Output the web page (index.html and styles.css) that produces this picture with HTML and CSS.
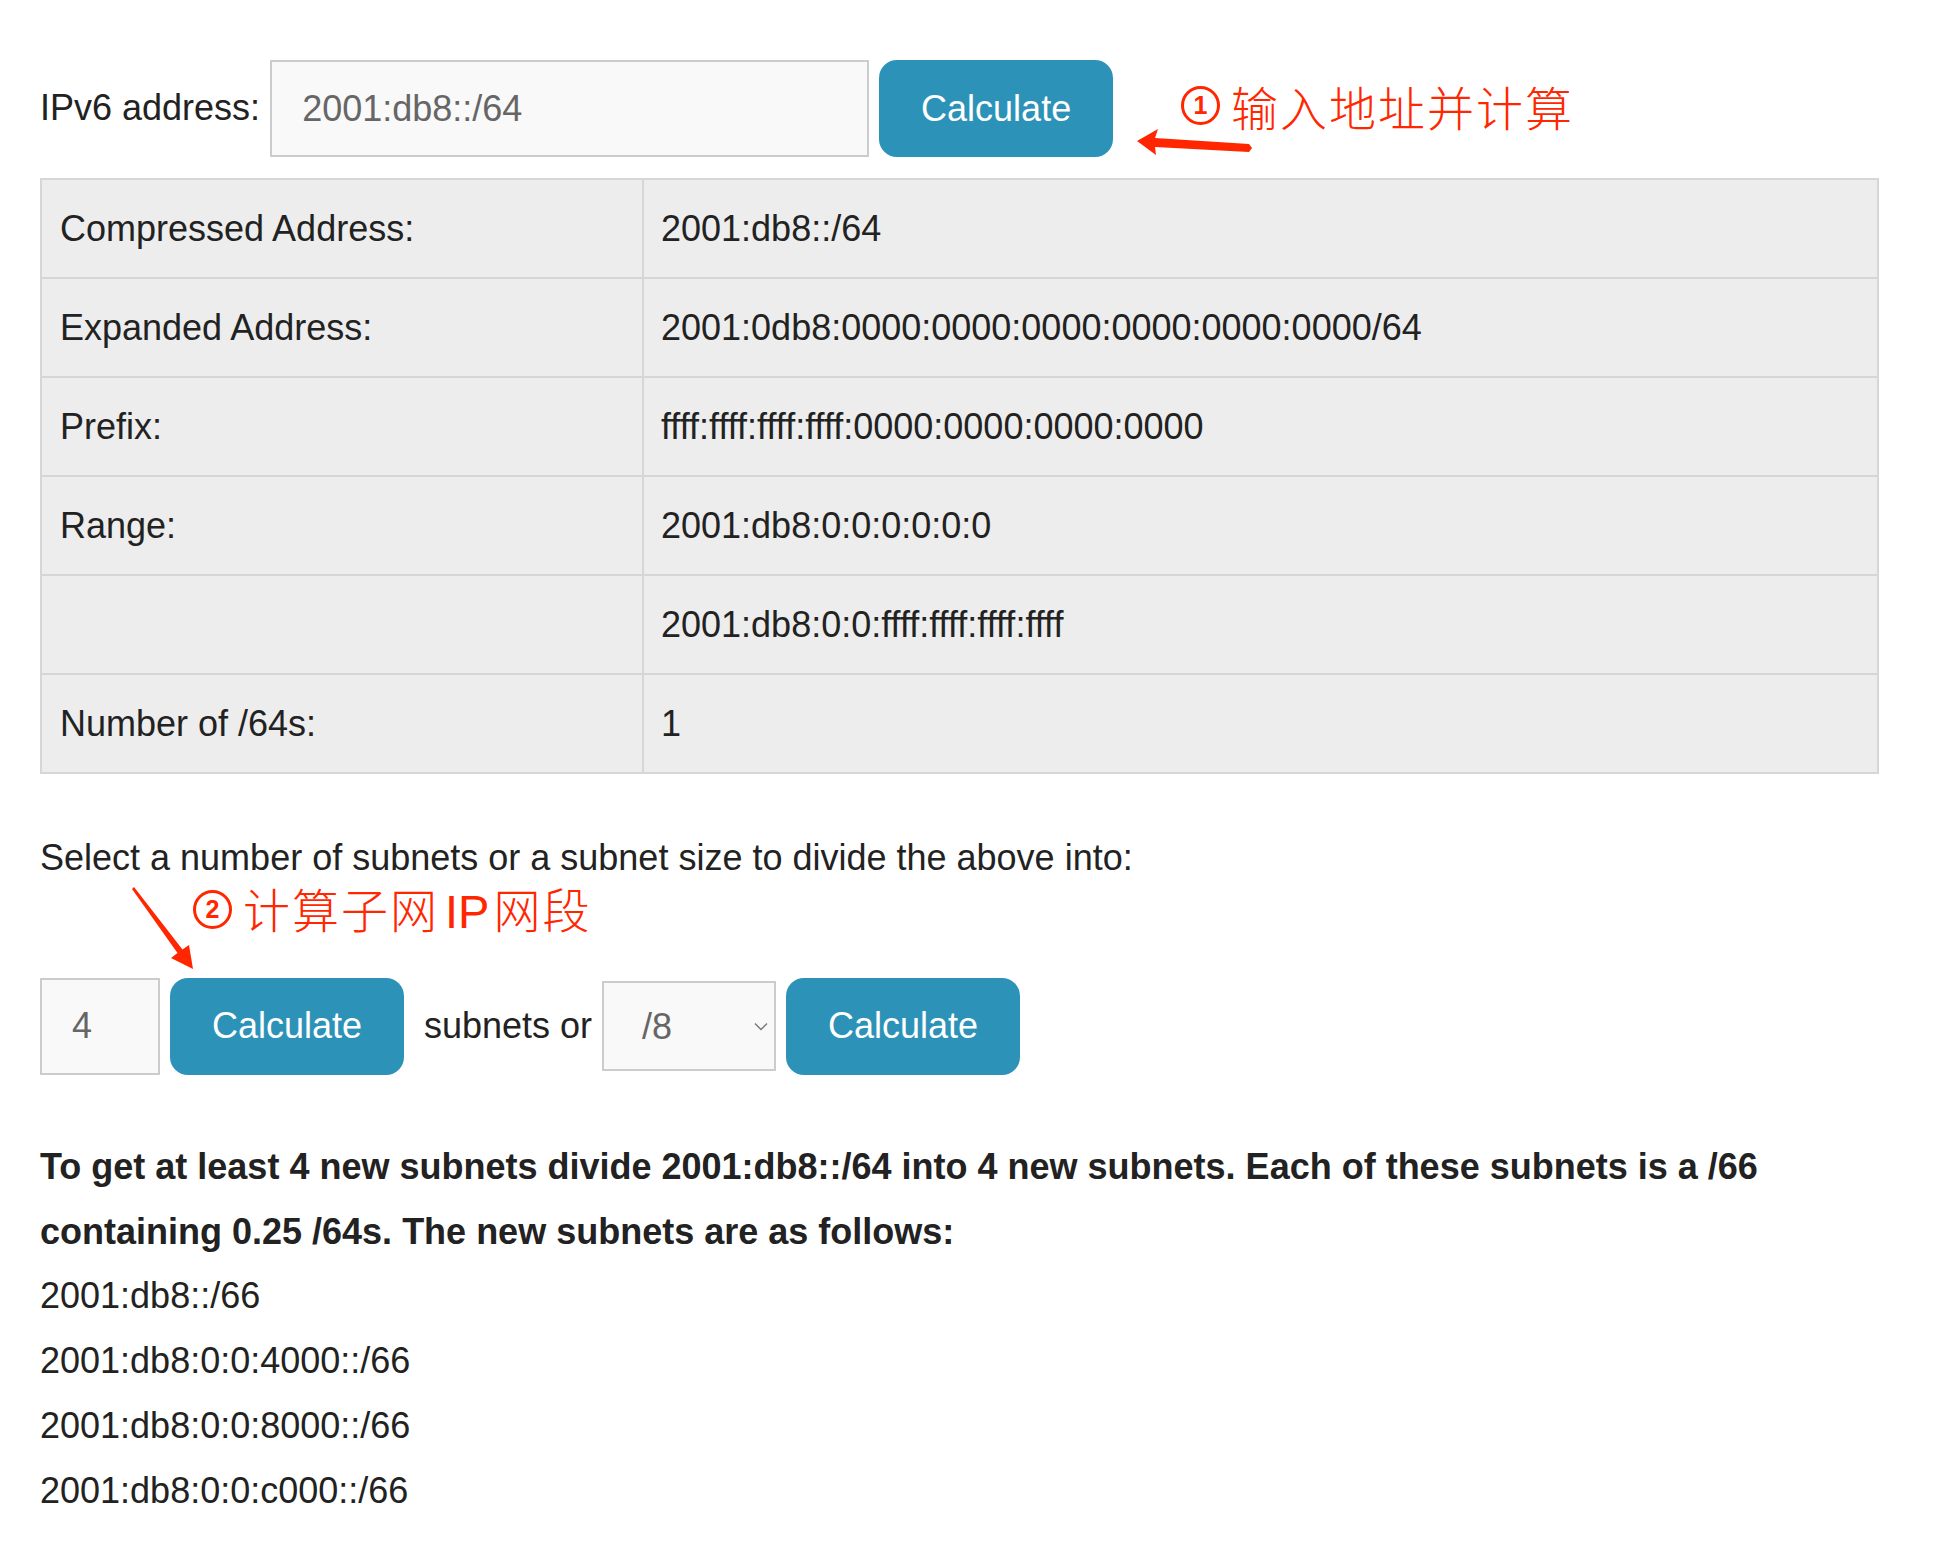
FILE: index.html
```html
<!DOCTYPE html>
<html>
<head>
    <title>IPv6 Subnet Calculator</title>
    <link rel="stylesheet" href="styles.css">
</head>
<body>
    <div class="page">
        <div class="form-row">
            <label for="ipv6Input" class="field-label">IPv6 address:</label>
            <input id="ipv6Input" class="text-input address-input" type="text" value="2001:db8::/64">
            <button class="calc-button">Calculate</button>
        </div>

        <table class="result-table">
            <tr>
                <td class="key">Compressed Address:</td>
                <td>2001:db8::/64</td>
            </tr>
            <tr>
                <td class="key">Expanded Address:</td>
                <td>2001:0db8:0000:0000:0000:0000:0000:0000/64</td>
            </tr>
            <tr>
                <td class="key">Prefix:</td>
                <td>ffff:ffff:ffff:ffff:0000:0000:0000:0000</td>
            </tr>
            <tr>
                <td class="key">Range:</td>
                <td>2001:db8:0:0:0:0:0:0</td>
            </tr>
            <tr>
                <td class="key"></td>
                <td>2001:db8:0:0:ffff:ffff:ffff:ffff</td>
            </tr>
            <tr>
                <td class="key">Number of /64s:</td>
                <td>1</td>
            </tr>
        </table>

        <p class="hint">Select a number of subnets or a subnet size to divide the above into:</p>

        <div class="form-row subnet-row">
            <input id="countInput" class="text-input count-input" type="text" value="4">
            <button class="calc-button">Calculate</button>
            <span class="or-label">subnets or</span>
            <div class="select-wrap">
                <select id="sizeSelect" class="size-select">
                    <option>/8</option>
                </select>
                <svg class="chevron" width="14" height="9" viewBox="0 0 14 9">
                    <path d="M1 1.5 L7 7.5 L13 1.5" fill="none" stroke="#777" stroke-width="1.4"/>
                </svg>
            </div>
            <button class="calc-button">Calculate</button>
        </div>

        <p class="summary">To get at least 4 new subnets divide 2001:db8::/64 into 4 new subnets. Each of these subnets is a /66 containing 0.25 /64s. The new subnets are as follows:</p>
        <ul class="subnet-list">
            <li>2001:db8::/66</li>
            <li>2001:db8:0:0:4000::/66</li>
            <li>2001:db8:0:0:8000::/66</li>
            <li>2001:db8:0:0:c000::/66</li>
        </ul>

        <!-- annotations drawn over the page -->
        <div class="note note-one">
            <span class="note-num">1</span>
            <span class="note-text">输入地址并计算</span>
        </div>
        <div class="note note-two">
            <span class="note-num">2</span>
            <span class="note-text">计算子网<span class="note-latin">IP</span>网段</span>
        </div>
        <svg class="arrows" width="1954" height="1568" viewBox="0 0 1954 1568">
            <polygon fill="#ff2600" points="1137,141 1158,129 1155,138 1249,144 1252,148 1249,152 1155,147 1156,155"/>
            <polygon fill="#ff2600" points="193,969 171,958 177.5,953 132,889 134,887 182.5,949.5 189,945"/>
        </svg>
    </div>
</body>
</html>
```

FILE: styles.css
```css
body {
    margin: 0;
    background-color: #fff;
    font-family: "Liberation Sans", Arial, sans-serif;
    font-size: 36px;
    line-height: 1.8;
    color: #222;
}

.page {
    position: relative;
    width: 1839px;
    padding: 60px 0 60px 40px;
}

.form-row {
    display: flex;
    align-items: center;
    gap: 10px;
    height: 97px;
}

.field-label {
    white-space: nowrap;
}

.text-input {
    box-sizing: border-box;
    height: 97px;
    border: 2px solid #ccc;
    background-color: #f9f9f9;
    color: #666;
    font-family: inherit;
    font-size: 36px;
    outline: none;
}

.address-input {
    width: 599px;
    padding: 0 30px;
}

.count-input {
    width: 120px;
    padding: 0 30px;
}

.calc-button {
    box-sizing: border-box;
    width: 234px;
    height: 97px;
    border: none;
    border-radius: 18px;
    background-color: #2d92b8;
    color: #fff;
    font-family: inherit;
    font-size: 36px;
    cursor: pointer;
    padding: 0;
}

.result-table {
    width: 1839px;
    margin-top: 21px;
    border-collapse: collapse;
    background-color: #ededed;
    border: 2px solid #d6d6d6;
}

.result-table td {
    height: 97px;
    padding: 0 16px 0 17px;
    border: 2px solid #d6d6d6;
    vertical-align: middle;
    line-height: 1.2;
}

.result-table .key {
    width: 566px;
    padding-left: 18px;
}

.hint {
    margin: 52px 0 0;
}

.subnet-row {
    margin-top: 87px;
}

.or-label {
    margin-left: 10px;
    white-space: nowrap;
}

.select-wrap {
    position: relative;
}

.size-select {
    box-sizing: border-box;
    width: 174px;
    height: 90px;
    padding: 0 0 0 38px;
    border: 2px solid #ccc;
    border-radius: 0;
    background-color: #f9f9f9;
    color: #666;
    font-family: inherit;
    font-size: 36px;
    appearance: none;
    -webkit-appearance: none;
    outline: none;
}

.chevron {
    position: absolute;
    right: 8px;
    top: 41px;
}

.summary {
    margin: 60px 0 0;
    font-weight: bold;
}

.subnet-list {
    list-style: none;
    margin: 0;
    padding: 0;
}

.note {
    position: absolute;
    display: flex;
    align-items: center;
    gap: 11px;
    color: #ff2600;
    font-family: "Noto Sans CJK SC", "Liberation Sans", sans-serif;
    font-weight: 300;
    line-height: 1;
}

.note-one {
    left: 1181px;
    top: 82px;
}

.note-two {
    left: 193px;
    top: 884px;
}

.note-num {
    box-sizing: border-box;
    width: 39px;
    height: 39px;
    border: 3px solid #ff2600;
    border-radius: 50%;
    display: flex;
    justify-content: center;
    align-items: center;
    font-family: "Liberation Sans", Arial, sans-serif;
    font-weight: bold;
    font-size: 25px;
}

.note-text {
    font-size: 47px;
    letter-spacing: 2px;
    white-space: nowrap;
}

.note-latin {
    margin: 0 4px 0 6px;
    letter-spacing: 0;
    font-family: "Liberation Sans", Arial, sans-serif;
    font-weight: normal;
}

.arrows {
    position: absolute;
    left: 0;
    top: 0;
    pointer-events: none;
}
```
